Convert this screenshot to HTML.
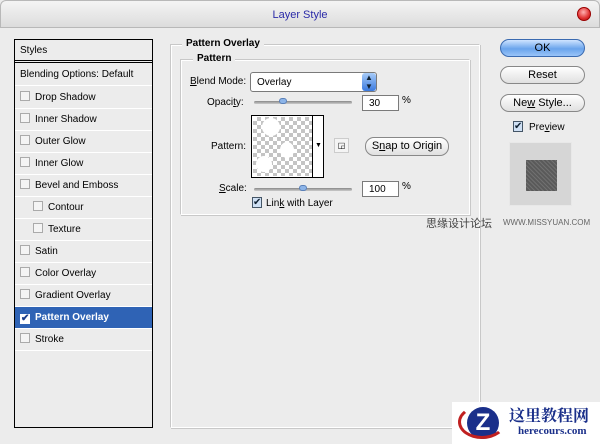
<!DOCTYPE html>
<html><head><style>
*{margin:0;padding:0;box-sizing:border-box}
body{width:600px;height:444px;background:#ececec;font-family:"Liberation Sans",Tahoma,sans-serif;font-size:10px;color:#000;position:relative;overflow:hidden}
.abs{position:absolute}
.title{left:0;top:0;width:600px;height:28px;background:linear-gradient(#f4f4f4,#dcdcdc);border:1px solid #b8b8b8;border-radius:6px 6px 0 0;text-align:center;line-height:28px;color:#2a2aa8;font-size:11px}
.close{left:577px;top:7px;width:14px;height:14px;border-radius:50%;background:radial-gradient(circle at 45% 35%,#ffb0b0,#e03030 60%,#a01010);border:1px solid #900}
.list{left:14px;top:39px;width:139px;height:389px;border:1px solid #000;background:#ececec}
.row{position:absolute;left:0;width:137px;height:22px;line-height:22px;padding-left:5px;border-bottom:1px solid #fff}
.cb{display:inline-block;width:10px;height:10px;border:1px solid #aaa;background:#f4f4f4;vertical-align:-1px;margin-right:5px}
.sel{background:#2f63b5;color:#fff;font-weight:bold}
.grp{border:1px solid #c8c8c8;border-right-color:#fff;border-bottom-color:#fff;box-shadow:inset 1px 1px 0 #fff,1px 1px 0 #c8c8c8}
.lbl{background:#ececec;font-weight:bold;font-size:10px;padding:0 4px}
.input{background:#fff;border:1px solid #7a7a7a;height:16px;line-height:16px;padding-left:6px}
.slider{height:3px;background:linear-gradient(#888,#ccc);border-radius:2px}
.thumb{width:8px;height:6px;background:#8cb4e8;border:1px solid #5a80b8;border-radius:3px}
.btn{border:1px solid #888;border-radius:9px;background:linear-gradient(#fff,#e0e0e0);text-align:center;font-size:11px;height:18px;line-height:16px}
.ok{background:linear-gradient(#cfe4ff,#6aa4ec 55%,#9ac4f8);border-color:#3a6ab0}
u{text-decoration:underline}
</style></head><body>
<div class="abs title">Layer Style</div>
<div class="abs close"></div>

<div class="abs list">
 <div class="row" style="top:0;height:23px;line-height:21px;border-bottom:3px double #000">Styles</div>
 <div class="row" style="top:24px">Blending Options: Default</div>
 <div class="row" style="top:47px"><span class="cb"></span>Drop Shadow</div>
 <div class="row" style="top:69px"><span class="cb"></span>Inner Shadow</div>
 <div class="row" style="top:91px"><span class="cb"></span>Outer Glow</div>
 <div class="row" style="top:113px"><span class="cb"></span>Inner Glow</div>
 <div class="row" style="top:135px"><span class="cb"></span>Bevel and Emboss</div>
 <div class="row" style="top:157px;padding-left:18px"><span class="cb"></span>Contour</div>
 <div class="row" style="top:179px;padding-left:18px"><span class="cb"></span>Texture</div>
 <div class="row" style="top:201px"><span class="cb"></span>Satin</div>
 <div class="row" style="top:223px"><span class="cb"></span>Color Overlay</div>
 <div class="row" style="top:245px"><span class="cb"></span>Gradient Overlay</div>
 <div class="row sel" style="top:267px"><span class="cb" style="background:#fff;border-color:#fff;color:#1a3c8a;font-size:10px;line-height:8px;text-align:center">✔</span>Pattern Overlay</div>
 <div class="row" style="top:289px"><span class="cb"></span>Stroke</div>
</div>

<div class="abs grp" style="left:170px;top:44px;width:310px;height:384px"></div>
<div class="abs lbl" style="left:182px;top:38px">Pattern Overlay</div>
<div class="abs grp" style="left:180px;top:59px;width:290px;height:156px"></div>
<div class="abs lbl" style="left:193px;top:53px">Pattern</div>

<div class="abs" style="left:190px;top:76px"><u>B</u>lend Mode:</div>
<div class="abs input" style="left:250px;top:72px;width:127px;height:20px;line-height:20px;border-radius:3px">Overlay</div>
<div class="abs" style="left:362px;top:73px;width:14px;height:18px;background:linear-gradient(#a8ccf8,#3a7ae0);border-radius:3px;color:#123;font-size:8px;line-height:9px;text-align:center">▲<br>▼</div>

<div class="abs" style="left:207px;top:97px">Opaci<u>t</u>y:</div>
<div class="abs slider" style="left:254px;top:101px;width:98px"></div>
<div class="abs thumb" style="left:279px;top:98px"></div>
<div class="abs input" style="left:362px;top:95px;width:37px">30</div>
<div class="abs" style="left:402px;top:95px">%</div>

<div class="abs" style="left:211px;top:141px">Pattern:</div>
<div class="abs" style="left:251px;top:115px;width:73px;height:63px;border:1px solid #000;background:#fff">
 <div style="position:absolute;left:1px;top:1px;width:59px;height:59px;background-color:#fff;background-image:linear-gradient(45deg,#c4c4c4 25%,transparent 25%,transparent 75%,#c4c4c4 75%),linear-gradient(45deg,#c4c4c4 25%,transparent 25%,transparent 75%,#c4c4c4 75%);background-size:8px 8px;background-position:0 0,4px 4px"></div>
 <div style="position:absolute;left:10px;top:2px;width:18px;height:18px;background:#fff;border-radius:50%"></div>
 <div style="position:absolute;left:28px;top:26px;width:14px;height:16px;background:#fff;border-radius:50%"></div>
 <div style="position:absolute;left:4px;top:40px;width:16px;height:16px;background:#fff;border-radius:50%"></div>
 <div style="position:absolute;left:60px;top:0;width:1px;height:61px;background:#000"></div>
 <div style="position:absolute;left:63px;top:26px;font-size:7px">▼</div>
</div>
<div class="abs" style="left:334px;top:138px;width:15px;height:15px;border:1px solid #ccc;background:#f4f4f4;font-size:8px;text-align:center;line-height:13px">◲</div>
<div class="abs btn" style="left:365px;top:137px;width:84px;height:19px">S<u>n</u>ap to Origin</div>

<div class="abs" style="left:219px;top:183px"><u>S</u>cale:</div>
<div class="abs slider" style="left:254px;top:188px;width:98px"></div>
<div class="abs thumb" style="left:299px;top:185px"></div>
<div class="abs input" style="left:362px;top:181px;width:37px">100</div>
<div class="abs" style="left:402px;top:181px">%</div>
<div class="abs" style="left:252px;top:197px;width:10px;height:11px;border:1px solid #456;background:#cfe0f4;font-size:10px;line-height:9px;color:#123">✔</div>
<div class="abs" style="left:266px;top:198px">Lin<u>k</u> with Layer</div>

<div class="abs btn ok" style="left:500px;top:39px;width:85px">OK</div>
<div class="abs btn" style="left:500px;top:66px;width:85px">Reset</div>
<div class="abs btn" style="left:500px;top:94px;width:85px">Ne<u>w</u> Style...</div>
<div class="abs" style="left:513px;top:121px;width:10px;height:11px;border:1px solid #456;background:#cfe0f4;font-size:10px;line-height:9px;color:#123">✔</div>
<div class="abs" style="left:529px;top:122px">Pre<u>v</u>iew</div>
<div class="abs" style="left:509px;top:142px;width:63px;height:64px;background:#d6d6d6;border:1px solid #e8e8e8"></div>
<div class="abs" style="left:526px;top:160px;width:31px;height:31px;background:#5a5a5a;background-image:repeating-linear-gradient(45deg,#707070 0 1px,transparent 1px 3px)"></div>

<div class="abs" style="left:426px;top:215px;font-family:'Noto Sans CJK SC',sans-serif;font-size:11px;color:#444">思缘设计论坛</div>
<div class="abs" style="left:503px;top:218px;font-size:8px;color:#666">WWW.MISSYUAN.COM</div>

<div class="abs" style="left:452px;top:402px;width:148px;height:42px;background:#fff"></div>
<div class="abs" style="left:467px;top:407px;width:32px;height:32px;border-radius:50%;background:#1a2f8a;color:#fff;font-weight:bold;font-size:24px;text-align:center;line-height:32px">Z</div>
<div class="abs" style="left:458px;top:405px;width:48px;height:34px;border:3px solid #c02020;border-radius:50%;border-right-color:transparent;border-top-color:transparent"></div>
<div class="abs" style="left:509px;top:403px;font-family:'Noto Serif CJK SC',serif;font-weight:bold;font-size:16px;color:#1a2f8a">这里教程网</div>
<div class="abs" style="left:518px;top:425px;font-family:'Liberation Serif',serif;font-weight:bold;font-size:11px;color:#1a2f8a">herecours.com</div>
</body></html>
